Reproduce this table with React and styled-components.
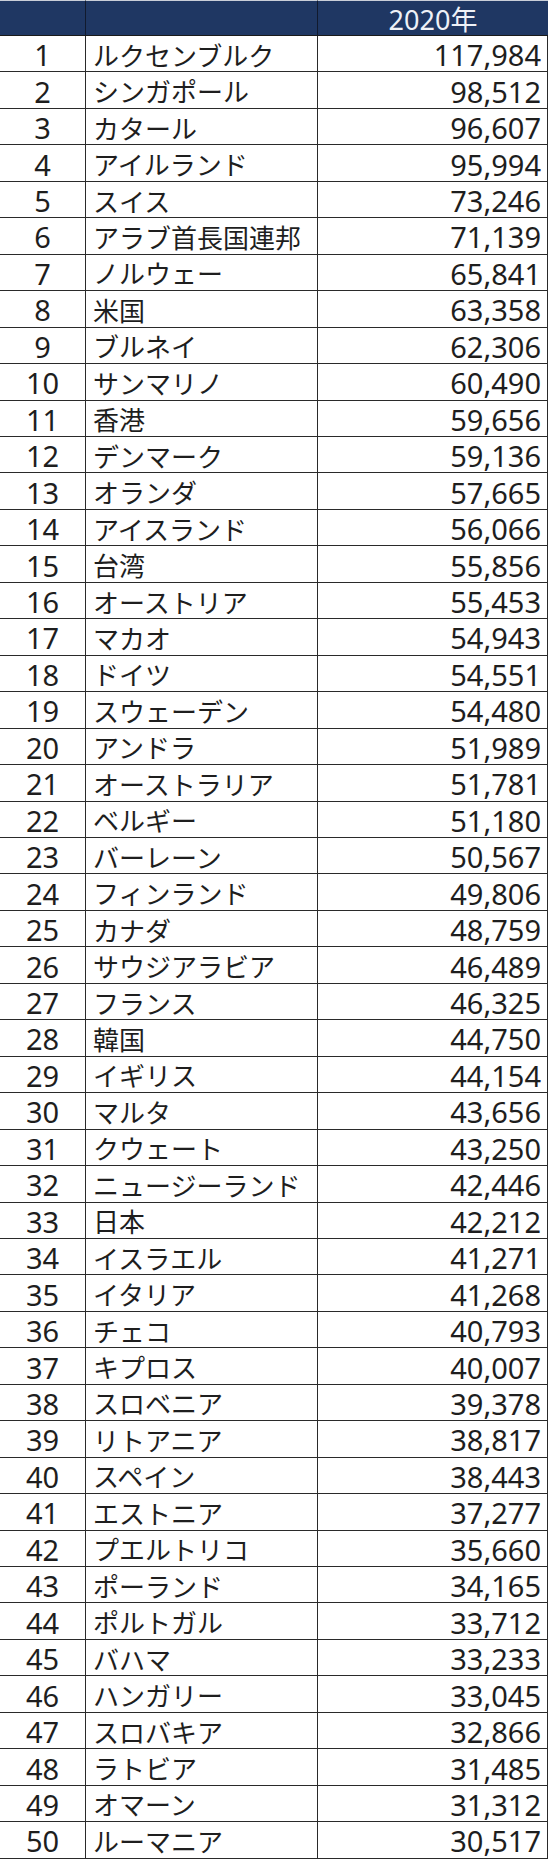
import React from 'react'
import styled, {createGlobalStyle} from 'styled-components'

const GlobalStyle = createGlobalStyle`
  html, body {
    margin: 0;
    padding: 0;
    background: #ffffff;
  }
`

const rows = [
  ['ルクセンブルク', '117,984'],
  ['シンガポール', '98,512'],
  ['カタール', '96,607'],
  ['アイルランド', '95,994'],
  ['スイス', '73,246'],
  ['アラブ首長国連邦', '71,139'],
  ['ノルウェー', '65,841'],
  ['米国', '63,358'],
  ['ブルネイ', '62,306'],
  ['サンマリノ', '60,490'],
  ['香港', '59,656'],
  ['デンマーク', '59,136'],
  ['オランダ', '57,665'],
  ['アイスランド', '56,066'],
  ['台湾', '55,856'],
  ['オーストリア', '55,453'],
  ['マカオ', '54,943'],
  ['ドイツ', '54,551'],
  ['スウェーデン', '54,480'],
  ['アンドラ', '51,989'],
  ['オーストラリア', '51,781'],
  ['ベルギー', '51,180'],
  ['バーレーン', '50,567'],
  ['フィンランド', '49,806'],
  ['カナダ', '48,759'],
  ['サウジアラビア', '46,489'],
  ['フランス', '46,325'],
  ['韓国', '44,750'],
  ['イギリス', '44,154'],
  ['マルタ', '43,656'],
  ['クウェート', '43,250'],
  ['ニュージーランド', '42,446'],
  ['日本', '42,212'],
  ['イスラエル', '41,271'],
  ['イタリア', '41,268'],
  ['チェコ', '40,793'],
  ['キプロス', '40,007'],
  ['スロベニア', '39,378'],
  ['リトアニア', '38,817'],
  ['スペイン', '38,443'],
  ['エストニア', '37,277'],
  ['プエルトリコ', '35,660'],
  ['ポーランド', '34,165'],
  ['ポルトガル', '33,712'],
  ['バハマ', '33,233'],
  ['ハンガリー', '33,045'],
  ['スロバキア', '32,866'],
  ['ラトビア', '31,485'],
  ['オマーン', '31,312'],
  ['ルーマニア', '30,517'],
]

const Table = styled.div`
  width: 548px;
  display: grid;
  grid-template-columns: 86px 232px 230px;
  grid-template-rows: 36px repeat(50, 36.46px);
  font-family: "Noto Sans", "Noto Sans CJK JP", sans-serif;
  color: #1e1e1e;
  border-right: 1.5px solid #2a2a2a;
  box-sizing: border-box;
`

const HeadCell = styled.div`
  background: #1f3763;
  border-top: 1px solid #c9ced8;
  border-right: ${p => (p.last ? 'none' : '1.5px solid #111a2e')};
  border-bottom: 1.5px solid #1a1a1a;
  color: #eef1f7;
  font-size: 27px;
  line-height: 1;
  display: flex;
  align-items: center;
  justify-content: center;
  box-sizing: border-box;
  padding-top: 2px;
`

const Cell = styled.div`
  border-bottom: 1.5px solid #2a2a2a;
  border-right: ${p => (p.last ? 'none' : '1.5px solid #2a2a2a')};
  display: flex;
  align-items: center;
  justify-content: ${p => p.align || 'flex-start'};
  box-sizing: border-box;
  padding: 2px 7px 0 7px;
  line-height: 1;
  font-size: ${p => (p.jp ? '26px' : '29px')};
  font-family: ${p => (p.jp ? '"Noto Sans CJK JP", sans-serif' : '"Noto Sans", "Noto Sans CJK JP", sans-serif')};
  white-space: nowrap;
`

export default function App() {
  return (
    <>
      <GlobalStyle />
      <Table>
        <HeadCell />
        <HeadCell />
        <HeadCell last>2020年</HeadCell>
        {rows.map(([name, value], i) => (
          <React.Fragment key={name}>
            <Cell align="center">{i + 1}</Cell>
            <Cell jp>{name}</Cell>
            <Cell align="flex-end" last>{value}</Cell>
          </React.Fragment>
        ))}
      </Table>
    </>
  )
}
